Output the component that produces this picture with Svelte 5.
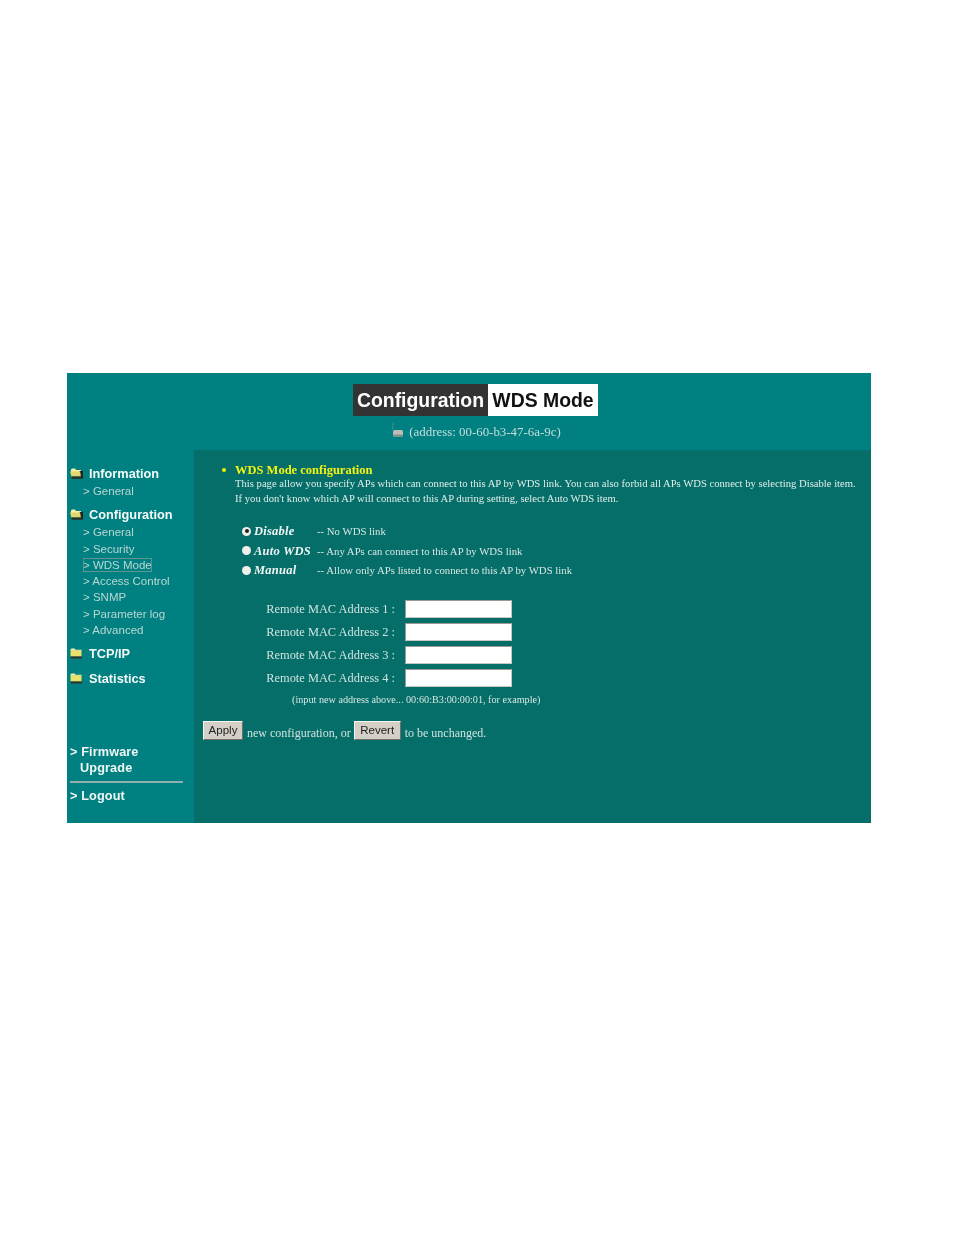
<script>
  const info = ['General'];
  const conf = ['General', 'Security', 'WDS Mode', 'Access Control', 'SNMP', 'Parameter log', 'Advanced'];
  const modes = [
    { name: 'Disable', desc: '-- No WDS link', on: true },
    { name: 'Auto WDS', desc: '-- Any APs can connect to this AP by WDS link', on: false },
    { name: 'Manual', desc: '-- Allow only APs listed to connect to this AP by WDS link', on: false }
  ];
  const macs = [1, 2, 3, 4];
</script>

{#snippet folder(open)}
  <svg class="folder" width="13" height="11" viewBox="0 0 13 11">
    {#if open}
      <path d="M1 1.5 2 .5h3l1 1.5h5v2H1z" fill="#f4eea8" />
      <path d="M9.5 3H13v7.5H2l-1-1.5h9z" fill="#24241e" />
      <path d="M0 3.5h10l1 5H1.5z" fill="#e2d870" />
      <path d="M2 8.5h9.5V10.5H2z" fill="#2e2e24" />
    {:else}
      <path d="M0.5 1.5 1.5.5h3l1 1.2h6v1H.5z" fill="#f6f2b0" />
      <path d="M.5 2.5h11v6H.5z" fill="#e8e268" />
      <path d="M.5 8.5h11.5V10.5H1z" fill="#33332a" />
    {/if}
  </svg>
{/snippet}

<div class="frame">
  <header class="top">
    <div class="title"><span class="dark">Configuration</span><span class="light">WDS Mode</span></div>
    <div class="addr">
      <svg width="12" height="15" viewBox="0 0 12 15"><path d="M0.8 0v7" stroke="#4f8f8a" stroke-width="0.9"/><rect x="1" y="7" width="10" height="6.5" rx="1.6" fill="#bcbfb9"/><rect x="1" y="11.5" width="10" height="2" rx="1" fill="#878f8c"/></svg>
      <span>(address: 00-60-b3-47-6a-9c)</span>
    </div>
  </header>
  <div class="body">
    <nav class="side">
      <div class="head first">{@render folder(true)}<span>Information</span></div>
      <ul>{#each info as i}<li><span>&gt; {i}</span></li>{/each}</ul>
      <div class="head second">{@render folder(true)}<span>Configuration</span></div>
      <ul>{#each conf as i}<li class:cur={i === 'WDS Mode'}><span>&gt; {i}</span></li>{/each}</ul>
      <div class="head third">{@render folder(false)}<span>TCP/IP</span></div>
      <div class="head fourth">{@render folder(false)}<span>Statistics</span></div>
      <div class="link fw">&gt; Firmware<br /><span class="ind">Upgrade</span></div>
      <hr />
      <div class="link">&gt; Logout</div>
    </nav>
    <main class="main">
      <div class="h"><i class="dot"></i><h1>WDS Mode configuration</h1></div>
      <p class="intro">This page allow you specify APs which can connect to this AP by WDS link. You can also forbid all APs WDS connect by selecting Disable item.<br />If you don't know which AP will connect to this AP during setting, select Auto WDS item.</p>
      <div class="modes">
        {#each modes as m}
          <div class="mode">
            <span class="radio" class:on={m.on}></span>
            <em>{m.name}</em>
            <span class="desc">{m.desc}</span>
          </div>
        {/each}
      </div>
      <div class="macs">
        {#each macs as n}
          <div class="mac"><label for="m{n}">Remote MAC Address {n} :</label><input id="m{n}" type="text" /></div>
        {/each}
      </div>
      <p class="hint">(input new address above... 00:60:B3:00:00:01, for example)</p>
      <div class="actions">
        <button>Apply</button><span>new configuration, or</span><button class="rev">Revert</button><span>to be unchanged.</span>
      </div>
    </main>
  </div>
</div>

<style>
  :global(body) { margin: 0; background: #fff; }
  .frame { box-sizing: border-box; width: 804px; height: 450px; margin: 373px 0 412px 67px; background: #008080; display: flex; flex-direction: column; filter: blur(0.4px); }
  .top { height: 77px; flex: none; display: flex; flex-direction: column; align-items: center; padding-top: 11px; box-sizing: border-box; }
  .title { display: flex; height: 32px; font: bold 19.4px/32px "Liberation Sans", sans-serif; margin-left: 13px; }
  .dark { background: #333; color: #fff; width: 135px; text-align: center; }
  .light { background: #fff; color: #111; width: 110px; text-align: center; }
  .addr { display: flex; align-items: center; gap: 5px; margin-top: 4px; margin-left: 15px; color: #c6dedb; font: 12.9px/16px "Liberation Serif", serif; }
  .addr span { padding-top: 4px; }
  .body { flex: 1; display: flex; min-height: 0; }
  .side { width: 127px; flex: none; font-family: "Liberation Sans", sans-serif; padding-left: 3px; box-sizing: border-box; }
  .head { display: flex; align-items: center; gap: 6px; height: 18px; color: #f4fafa; font-weight: bold; font-size: 12.75px; }
  .head.first { margin-top: 14px; }
  .head.second { margin-top: 6px; }
  .head.third { margin-top: 6px; }
  .head.fourth { margin-top: 7px; }
  .folder { flex: none; }
  ul { list-style: none; margin: 0; padding: 1px 0 0 13px; }
  li { height: 16.3px; font-size: 11.5px; line-height: 16.3px; color: #b9d6d3; }
  li.cur span { outline: 1px solid #5d9490; outline-offset: -1px; display: inline-block; height: 14px; line-height: 14px; }
  .link { color: #f0f6f6; font-weight: bold; font-size: 12.7px; line-height: 16px; letter-spacing: 0.12px; }
  .fw { margin-top: 57px; }
  .ind { margin-left: 10px; }
  hr { border: 0; height: 2px; background: #8fb0ac; margin: 5px 11px 5px 0; width: 113px; }
  .main { flex: 1; background: #066e68; color: #d6e8e6; font-family: "Liberation Serif", serif; padding: 12px 0 0 28px; }
  .h { display: flex; align-items: center; height: 16px; }
  .dot { width: 4px; height: 4px; border-radius: 50%; background: #f4f400; margin-right: 9px; }
  h1 { margin: 0; font: bold 12.5px/16px "Liberation Serif", serif; color: #f4f414; }
  .intro { margin: -1px 0 0 13px; font-size: 10.65px; line-height: 14.5px; white-space: nowrap; color: #e0eeec; }
  .modes { margin: 16px 0 0 20px; }
  .mode { display: flex; align-items: center; height: 19.5px; }
  .radio { width: 9px; height: 9px; border-radius: 50%; background: #f0f0ea; flex: none; box-sizing: border-box; position: relative; margin-top: -1px; }
  .radio.on::after { content: ""; position: absolute; inset: 2.5px; border-radius: 50%; background: #222; }
  em { width: 63px; margin-left: 3px; font-weight: bold; font-size: 12.5px; color: #f0f6f6; white-space: nowrap; letter-spacing: 0.25px; }
  .desc { font-size: 10.75px; color: #d6e8e6; white-space: nowrap; margin-top: -1px; }
  .macs { margin-top: 17px; }
  .mac { display: flex; align-items: center; justify-content: flex-end; width: 290px; height: 23px; font-size: 12.4px; color: #cfe3e0; }
  label { margin-right: 10px; white-space: nowrap; }
  input { box-sizing: border-box; width: 107px; height: 18px; padding: 0; border: 1px solid #c8c8c0; border-top-color: #9a9a92; border-left-color: #9a9a92; background: #fff; flex: none; }
  .hint { margin: 3px 0 0 70px; font-size: 10.2px; line-height: 14px; color: #d6e8e6; white-space: nowrap; }
  .actions { display: flex; align-items: center; margin: 14px 0 0 -19px; font-size: 12px; color: #cfe3e0; }
  button { box-sizing: border-box; width: 40px; height: 19px; padding: 0 0 2px; font: 11.5px "Liberation Sans", sans-serif; background: #d4d0c8; color: #222; border: 1px solid; border-color: #f4f4f0 #6e6e68 #6e6e68 #f4f4f0; margin-right: 4px; }
  button.rev { width: 47px; margin-left: 3px; }
  .actions span { padding-top: 5px; }
</style>
